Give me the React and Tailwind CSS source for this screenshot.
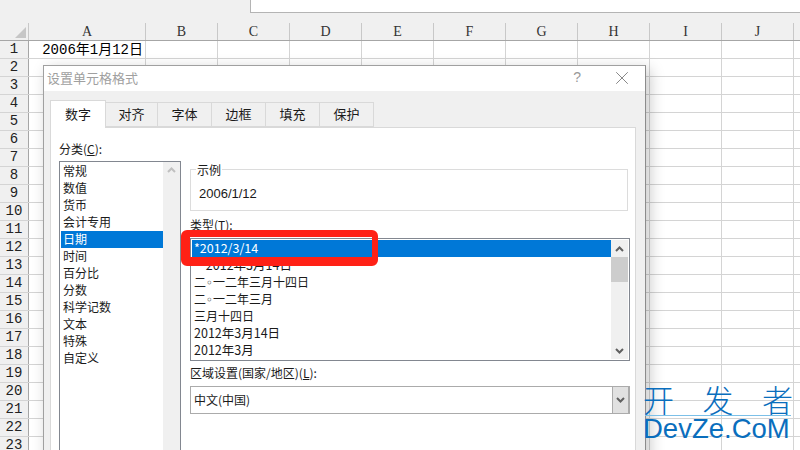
import { X } from 'lucide-react';

const columns = [
  { label: 'A', width: 'w-[117px]' },
  { label: 'B', width: 'w-[72px]' },
  { label: 'C', width: 'w-[72px]' },
  { label: 'D', width: 'w-[72px]' },
  { label: 'E', width: 'w-[72px]' },
  { label: 'F', width: 'w-[72px]' },
  { label: 'G', width: 'w-[72px]' },
  { label: 'H', width: 'w-[72px]' },
  { label: 'I', width: 'w-[72px]' },
  { label: 'J', width: 'w-[72px]' },
  { label: '', width: 'w-[10px]' },
];

const rows = Array.from({ length: 23 }, (_, i) => i + 1);
const tabs = ['对齐', '字体', '边框', '填充', '保护'];
const categories = ['常规', '数值', '货币', '会计专用', '日期', '时间', '百分比', '分数', '科学记数', '文本', '特殊', '自定义'];

// the small ring is narrower than a CJK cell, so it gets its own font
const Ring = () => <span className="font-['DejaVu_Sans',sans-serif]">◦</span>;

const types = [
  { id: 'a', text: '*2012/3/14', size: 'text-[12.5px]' },
  { id: 'b', text: '*2012年3月14日', size: 'text-[12.5px]' },
  { id: 'c', text: <>二<Ring />一二年三月十四日</>, size: 'text-[12px]' },
  { id: 'd', text: <>二<Ring />一二年三月</>, size: 'text-[12px]' },
  { id: 'e', text: '三月十四日', size: 'text-[12px]' },
  { id: 'f', text: '2012年3月14日', size: 'text-[12.5px]' },
  { id: 'g', text: '2012年3月', size: 'text-[12.5px]' },
];

const Chevron = ({ down, className }) => (
  <svg width="9" height="6" viewBox="0 0 9 6" className={className}>
    <path d={down ? 'M1 1 L4.5 4.5 L8 1' : 'M1 5 L4.5 1.5 L8 5'} fill="none" stroke="currentColor" strokeWidth="2" />
  </svg>
);

const Sheet = () => (
  <div className="flex flex-col h-full bg-white">
    {/* Ribbon leftovers and formula bar */}
    <div className="h-[23px] shrink-0 bg-[#f0f0f0]">
      <div className="ml-[250px] h-[13px] bg-white border-l border-b border-[#b4b4b4]" />
    </div>

    {/* Column headers */}
    <div className="flex h-[18px] shrink-0 bg-[#f0f0f0] border-b border-[#a6a6a6]">
      <div className="w-[29px] shrink-0 border-r border-[#c8c8c8] flex items-end justify-end pr-[2px] pb-[2px]">
        <svg width="11" height="11" viewBox="0 0 11 11">
          <path d="M11 0 V11 H0 Z" fill="#c6c6c6" />
        </svg>
      </div>
      {columns.map((col) => (
        <div
          key={col.label || 'end'}
          className={`${col.width} shrink-0 border-r border-[#c8c8c8] flex items-center justify-center text-[14px] text-[#333] font-['Liberation_Serif',serif]`}
        >
          {col.label}
        </div>
      ))}
    </div>

    {/* Rows */}
    {rows.map((row) => (
      <div key={row} className="flex h-[18px] shrink-0 border-b border-[#d4d4d4]">
        <div className="w-[29px] shrink-0 bg-[#f0f0f0] border-r border-[#a6a6a6] flex items-center justify-center text-[14px] text-[#222] font-['Liberation_Mono',monospace]">
          {row}
        </div>
        {columns.map((col, i) => (
          <div
            key={col.label || 'end'}
            className={`${col.width} shrink-0 border-r border-[#d4d4d4] flex items-center justify-end pr-[2px] text-[14px] leading-none text-black whitespace-nowrap font-['Liberation_Mono','Noto_Sans_CJK_SC',monospace]`}
          >
            {row === 1 && i === 0 ? '2006年1月12日' : ''}
          </div>
        ))}
      </div>
    ))}
  </div>
);

const Dialog = () => (
  <div className="absolute left-[43px] top-[65px] w-[603px] h-[400px] bg-[#f0f0f0] border border-[#a0a0a0] border-r-[#8c8c8c] shadow-[4px_4px_14px_rgba(0,0,0,0.22)] flex flex-col font-['Noto_Sans_CJK_SC','Liberation_Sans',sans-serif] text-[12px] text-[#1a1a1a]">
    {/* Title bar */}
    <div className="h-[25px] shrink-0 bg-white flex items-center pl-[3px] pb-[2px] text-[#a0a0a0]">
      <span className="text-[13px]">设置单元格格式</span>
      <span className="ml-auto mr-[30px] text-[14px] font-['Liberation_Sans',sans-serif] text-[#999]">?</span>
      <X size={22} strokeWidth={1} absoluteStrokeWidth className="mr-[12px] text-[#888]" />
    </div>

    {/* Tabs */}
    <div className="flex items-end h-[36px] shrink-0 pl-[6px]">
      <div className="relative z-10 w-[56px] h-[28px] -mb-px pb-[2px] bg-white border border-b-0 border-[#d9d9d9] flex items-center justify-center text-[13px]">
        数字
      </div>
      {tabs.map((tab, i) => (
        <div
          key={tab}
          className={`${i === 0 ? 'w-[52px]' : 'w-[54px]'} h-[25px] pb-[1px] border border-l-0 border-[#d9d9d9] flex items-center justify-center text-[13px]`}
        >
          {tab}
        </div>
      ))}
    </div>

    {/* Panel */}
    <div className="ml-[6px] mr-[9px] flex-1 bg-white border border-[#d9d9d9] pl-[8px] pr-[5px] flex gap-[9px]">
      {/* Category column */}
      <div className="w-[122px] shrink-0 flex flex-col">
        <div className="h-[33px] pt-[12px] leading-[18px]">
          分类(<span className="underline">C</span>):
        </div>
        <div className="flex-1 flex border border-[#828790] pl-px pt-[1px] bg-white">
          <div className="flex-1 flex flex-col">
            {categories.map((item) => (
              <div
                key={item}
                className={`h-[17px] leading-[15px] pl-[2px] ${item === '日期' ? 'bg-[#0078d7] text-white' : ''}`}
              >
                {item}
              </div>
            ))}
          </div>
          <div className="w-[17px] bg-[#f0f0f0] flex justify-center pt-[5px] -mt-[1px] text-[#c0c0c0]">
            <Chevron />
          </div>
        </div>
      </div>

      {/* Right column */}
      <div className="flex-1 flex flex-col pt-[41px]">
        <div className="relative h-[42px] shrink-0 mr-[2px] border border-[#dcdcdc] pl-[8px] pt-[15px] leading-[18px] font-['Liberation_Sans','Noto_Sans_CJK_SC',sans-serif] text-[13px]">
          <span className="absolute left-[5px] -top-[8px] px-px bg-white leading-[16px] text-[12px] font-['Noto_Sans_CJK_SC',sans-serif]">示例</span>
          2006/1/12
        </div>

        <div className="h-[27px] shrink-0 pt-[5px] leading-[18px]">
          类型(<span className="underline">T</span>):
        </div>
        <div className="h-[123px] shrink-0 flex border border-[#828790] p-px bg-white">
          <div className="flex-1 flex flex-col whitespace-nowrap">
            {types.map((item, i) => (
              <div
                key={item.id}
                className={`h-[17px] leading-[15px] ${item.size} ${i === 0 ? 'bg-[#0078d7] text-white' : ''} ${i === 1 ? 'pl-[8px]' : 'pl-[2px]'}`}
              >
                {item.text}
              </div>
            ))}
          </div>
          <div className="w-[17px] bg-[#f0f0f0] flex flex-col items-center text-[#606060]">
            <div className="h-[17px] flex items-center justify-center"><Chevron /></div>
            <div className="w-full h-[25px] bg-[#cdcdcd]" />
            <div className="flex-1" />
            <div className="h-[17px] flex items-center justify-center"><Chevron down /></div>
          </div>
        </div>

        <div className="h-[25px] shrink-0 pt-[3px] leading-[18px]">
          区域设置(国家/地区)(<span className="underline">L</span>):
        </div>
        <div className="h-[28px] shrink-0 flex items-stretch border border-[#ababab] pl-[3px] bg-white">
          <div className="flex-1 flex items-center">中文(中国)</div>
          <div className="w-[17px] bg-[#e1e1e1] border-l border-r border-[#ababab] flex items-center justify-center text-[#606060]">
            <Chevron down />
          </div>
        </div>
      </div>
    </div>
  </div>
);

export default function App() {
  return (
    <div className="relative w-[800px] h-[450px] overflow-hidden">
      <Sheet />
      <Dialog />

      {/* Red annotation box */}
      <div className="absolute left-[181px] top-[230px] w-[197px] h-[36px] border-[#ff2116] border-t-[7px] border-l-[9px] border-b-[9px] border-r-[6px] rounded-[6px]" />

      {/* Watermark */}
      <div className="absolute left-[643px] top-[383px] w-[150px] text-[#0a6ebd]">
        <div className="flex justify-between h-[32px] text-[31px] leading-[32px] font-['Noto_Sans_CJK_SC',sans-serif] font-light">
          <span>开</span>
          <span>发</span>
          <span>者</span>
        </div>
        <div className="ml-[2px] w-[146px] h-px bg-[#7cc0e8]" />
        <div className="text-[27.5px] leading-[26px] font-['Liberation_Sans',sans-serif] whitespace-nowrap">DevZe.CoM</div>
      </div>
    </div>
  );
}
